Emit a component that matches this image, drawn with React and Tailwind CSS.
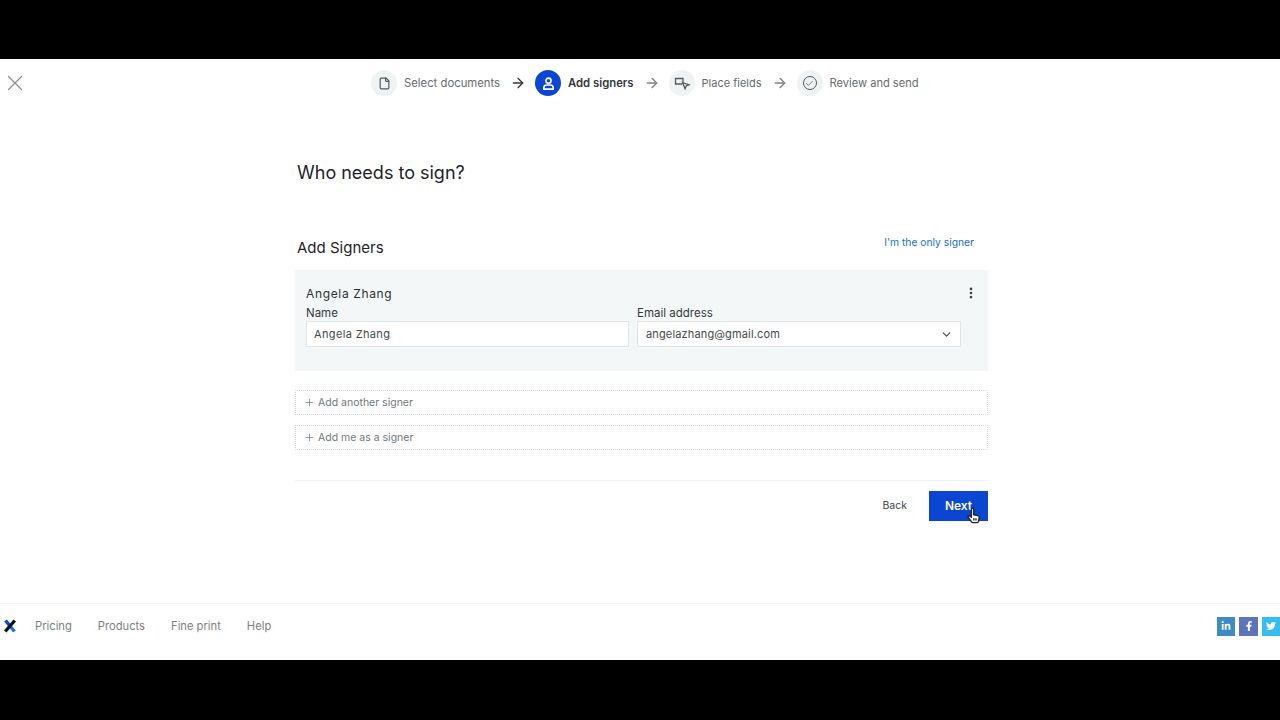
import { ArrowRight, Check, ChevronDown, EllipsisVertical, File, Plus, X } from 'lucide-react';
import { FaFacebookF, FaLinkedinIn, FaTwitter } from 'react-icons/fa';

function StepIcon({ active, children }) {
  return (
    <span className={`flex h-[26px] w-[26px] shrink-0 items-center justify-center rounded-full ${active ? 'bg-[#0b46d3] text-white' : 'bg-[#f0f3f4] text-[#55595d]'}`}>
      {children}
    </span>
  );
}

function Step({ icon, label, active, size }) {
  return (
    <div className="flex items-center gap-[7px]">
      <StepIcon active={active}>{icon}</StepIcon>
      <span className={`whitespace-nowrap ${size} ${active ? 'font-semibold text-[#33383b]' : 'text-[#666b6f]'}`}>{label}</span>
    </div>
  );
}

function AddRow({ label }) {
  return (
    <button className="flex h-[25px] w-full items-center gap-[3px] border border-dotted border-[#d5d8da] pl-[8px] text-[10.5px] text-[#73787c]">
      <Plus className="h-[11px] w-[11px]" strokeWidth={1.6} />
      {label}
    </button>
  );
}

function Social({ color, children }) {
  return <a className={`flex h-[19px] items-center justify-center text-[10px] text-white ${color}`}>{children}</a>;
}

export default function App() {
  return (
    <div className="flex h-[720px] flex-col bg-black font-['Inter',sans-serif]">
      <div className="h-[59px] shrink-0" />
      <div className="flex flex-1 flex-col bg-white">
        <header className="flex h-[48px] items-center pl-[2px]">
          <X className="h-[26px] w-[26px] text-[#8a8e91]" strokeWidth={1.1} />
          <nav className="ml-[343px] flex items-center">
            <Step
              size="text-[11.3px]"
              label="Select documents"
              icon={<File className="h-[13px] w-[13px]" strokeWidth={2.2} />}
            />
            <ArrowRight className="ml-[10px] mr-[9px] h-[16px] w-[16px] text-[#33383b]" strokeWidth={2} />
            <Step
              active
              size="text-[11.3px]"
              label="Add signers"
              icon={
                <svg viewBox="0 0 16 16" className="h-[15px] w-[15px]" fill="none" stroke="currentColor" strokeWidth="1.7">
                  <circle cx="8" cy="5" r="2.7" />
                  <path d="M3 14v-1.500C3 10.500 4.500 9.600 6 9.600h4c1.500 0 3 .9 3 2.900V14z" />
                </svg>
              }
            />
            <ArrowRight className="ml-[10px] mr-[9px] h-[16px] w-[16px] text-[#7d8285]" strokeWidth={2} />
            <Step
              size="text-[11px]"
              label="Place fields"
              icon={
                <svg viewBox="0 0 18 18" className="h-[18px] w-[18px]" fill="none" stroke="currentColor" strokeWidth="1.3">
                  <path d="M9 10H2.500V4.500H10V8" />
                  <path d="M9.500 8.500l6.500 2.300-2.800 1.100-1.100 2.800z" />
                </svg>
              }
            />
            <ArrowRight className="ml-[10px] mr-[9px] h-[16px] w-[16px] text-[#7d8285]" strokeWidth={2} />
            <Step
              size="text-[11.1px]"
              label="Review and send"
              icon={
                <span className="flex h-[14px] w-[14px] items-center justify-center rounded-full border border-[#55595d]">
                  <Check className="h-[9px] w-[9px]" strokeWidth={2} />
                </span>
              }
            />
          </nav>
        </header>

        <main className="ml-[295px] w-[693px]">
          <h1 className="mt-[53px] pl-[2px] text-[18px] leading-[26px] text-[#1f2326]">Who needs to sign?</h1>

          <div className="mt-[48px] flex items-start justify-between pl-[2px] pr-[14px]">
            <h2 className="mt-[3px] text-[15px] leading-[22px] text-[#1f2326]">Add Signers</h2>
            <a className="text-[10.3px] leading-[16px] text-[#1a6fc9]">I'm the only signer</a>
          </div>

          <section className="mt-[11px] h-[101px] bg-[#f4f7f8] pl-[11px] pr-[27px] pt-[16px]">
            <div className="flex items-center justify-between">
              <span className="text-[12px] leading-[16px] tracking-[0.65px] text-[#2b2f32]">Angela Zhang</span>
              <EllipsisVertical className="-mr-[17px] -mt-[2px] h-[14px] w-[14px] text-[#3a3f42]" strokeWidth={2.5} />
            </div>
            <div className="mt-[3px] grid grid-cols-[323px_324px] gap-x-[8px]">
              <label className="block">
                <span className="block text-[11.5px] leading-[16px] text-[#33383b]">Name</span>
                <div className="flex h-[26px] items-center border border-[#e2e5e7] bg-white pl-[7px] text-[11px] tracking-[0.35px] text-[#43484b]">
                  Angela Zhang
                </div>
              </label>
              <label className="block">
                <span className="block text-[11.5px] leading-[16px] text-[#33383b]">Email address</span>
                <div className="flex h-[26px] items-center justify-between border border-[#e2e5e7] bg-white pl-[8px] pr-[7px] text-[11px] tracking-[0.15px] text-[#43484b]">
                  angelazhang@gmail.com
                  <ChevronDown className="h-[13px] w-[13px] text-[#43484b]" strokeWidth={2} />
                </div>
              </label>
            </div>
          </section>

          <div className="mt-[19px] flex flex-col gap-[10px]">
            <AddRow label="Add another signer" />
            <AddRow label="Add me as a signer" />
          </div>

          <div className="mt-[30px] border-t border-[#f0f1f2]" />

          <div className="mt-[10px] flex items-center justify-end gap-[22px]">
            <button className="text-[10.5px] text-[#43484b]">Back</button>
            <button className="relative h-[30px] w-[59px] bg-[#0b46d3] text-[12px] font-semibold text-white">
              Next
              <svg viewBox="0 0 24 24" className="absolute left-[36px] top-[16px] h-[17px] w-[17px]" fill="#fff" stroke="#222" strokeWidth="2" strokeLinejoin="round">
                <path d="M9 3a1.600 1.600 0 0 1 3.200 0v8l6 1.200c1.300.3 2 1.200 1.800 2.500l-.8 5.300c-.2 1-.9 2-2 2h-6c-.8 0-1.500-.4-2-1L4.500 14.500c-1-1.500 1-3 2.300-1.800L9 14.500z" />
                <path d="M12.500 16v3M15.500 16v3" />
              </svg>
            </button>
          </div>
        </main>

        <footer className="mt-auto flex h-[57px] items-center justify-between border-t border-[#f3f4f5] pb-[12px]">
          <div className="flex items-center">
            <svg viewBox="0 0 14 14" className="ml-[3px] h-[14px] w-[14px]" fill="none">
              <path d="M2.500 1.500L7 7" stroke="#0b46d3" strokeWidth="3.4" />
              <path d="M11.500 12.500L7 7" stroke="#1a6fe0" strokeWidth="3.4" />
              <path d="M11.800 1.500L2.200 12.500" stroke="#10151c" strokeWidth="3.4" />
            </svg>
            <nav className="ml-[18px] flex items-center gap-[26px] text-[11.2px] text-[#7b8084]">
              <a>Pricing</a>
              <a>Products</a>
              <a>Fine print</a>
              <a>Help</a>
            </nav>
          </div>
          <div className="flex gap-[4px]">
            <Social color="w-[18px] bg-[#3c8cc5]"><FaLinkedinIn /></Social>
            <Social color="w-[19px] bg-[#5b74bc]"><FaFacebookF /></Social>
            <Social color="w-[18px] bg-[#35bdf0]"><FaTwitter /></Social>
          </div>
        </footer>
      </div>
      <div className="h-[60px] shrink-0" />
    </div>
  );
}
